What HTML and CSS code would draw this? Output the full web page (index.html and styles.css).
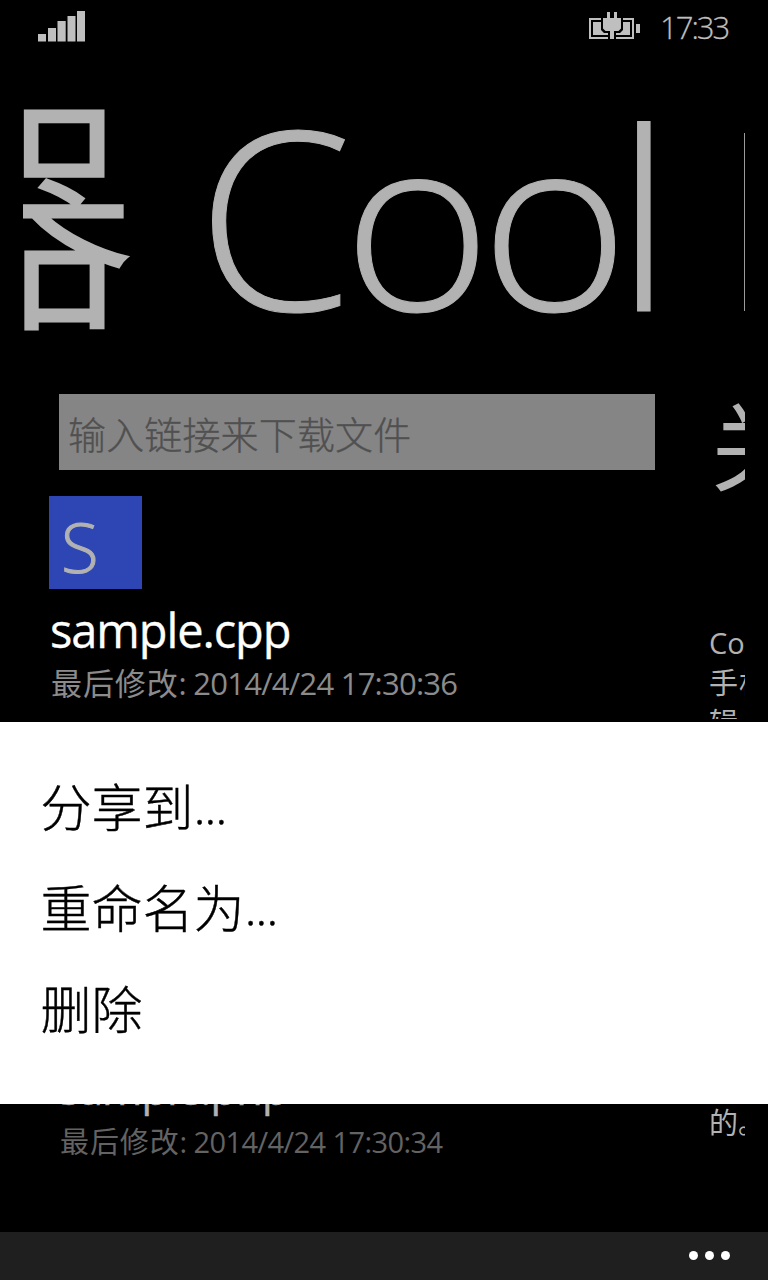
FILE: index.html
```html
<!DOCTYPE html>
<html lang="zh-CN">
<head>
<meta charset="utf-8">
<title>Cool Editor</title>
<link rel="stylesheet" href="styles.css">
</head>
<body>
<div class="phone">
  <header class="status">
    <svg class="signal" width="48" height="32" viewBox="0 0 48 32" fill="#bfbfbf">
      <path d="M0 24h8v7.500H0zM10 18h8v13.500h-8zM19.500 11h8.200v20.500h-8.200zM29.500 6h8v25.500h-8zM39 1h8v30.500h-8z"/>
    </svg>
    <div class="status-right">
      <svg class="battery" width="52" height="28" viewBox="0 0 52 28">
        <path d="M1 7h43v19H1z" fill="none" stroke="#bfbfbf" stroke-width="2"/>
        <path d="M4 10h37v13H4zM47 12h4v9h-4z" fill="#bfbfbf"/>
        <path d="M12 4h22v14l-3 3h-4v7h-8v-7h-4l-3-3z" fill="#000"/>
        <path d="M18 0h3v6h4V0h3v6h4v10.500L29.500 19H25v8h-4v-8h-4.500L14 16.500V6h4z" fill="#bfbfbf"/>
      </svg>
      <span class="clock">17:33</span>
    </div>
  </header>
  <main class="panorama">
    <h1 class="title"><span class="title-cjk">器</span><span class="title-name">C<span class="title-oo">oo</span>l</span><span class="title-next">E</span></h1>
    <div class="sections">
      <section class="files">
        <div class="url">输入链接来下载文件</div>
        <div class="tile">S</div>
        <div class="name">sample.cpp</div>
        <div class="date"><span class="date-label">最后修改</span>: 2014/4/24 17:30:36</div>
        <div class="item">
          <div class="name name-small">sample.php</div>
          <div class="date date-small"><span class="date-label">最后修改</span>: 2014/4/24 17:30:34</div>
        </div>
      </section>
      <section class="about">
        <h2 class="about-title">关于</h2>
        <p class="about-text">Cool<br><span class="about-cjk">手机</span><br>辑</p>
        <p class="about-end">的。</p>
      </section>
    </div>
  </main>
  <footer class="appbar"><i class="dot"></i><i class="dot"></i><i class="dot"></i></footer>
  <nav class="menu">
    <div class="menu-item">分享到<span class="dots">...</span></div>
    <div class="menu-item">重命名为<span class="dots">...</span></div>
    <div class="menu-item">删除</div>
  </nav>
</div>
</body>
</html>
```
FILE: styles.css
```css
* { box-sizing: border-box; }
body { margin: 0; background: #000; }
.phone {
  position: relative;
  display: flex;
  flex-direction: column;
  width: 768px;
  height: 1280px;
  overflow: hidden;
  background: #000;
  color: #b2b2b2;
  font-family: "Open Sans", "Noto Sans CJK SC", sans-serif;
  white-space: nowrap;
}
.status {
  display: flex;
  justify-content: space-between;
  flex: none;
  height: 56px;
  padding: 10px 39px 0 38px;
}
.status-right { display: flex; gap: 19px; }
.battery { margin-top: 2px; }
.clock {
  width: 69px;
  font-size: 31px;
  font-weight: 300;
  line-height: 34px;
  letter-spacing: -2px;
  color: #bfbfbf;
  -webkit-text-stroke: .3px #bfbfbf;
}
.panorama { flex: 1; min-height: 0; margin: 0 23px; overflow: hidden; }
.title {
  display: flex;
  height: 338px;
  margin: 0 0 0 -139px;
  font-size: 250px;
  font-weight: 300;
  line-height: 316px;
}
.title-cjk {
  width: 313px;
  flex: none;
  font-family: "Noto Sans CJK SC", sans-serif;
  font-weight: 300;
  font-size: 252px;
  line-height: 290px;
  -webkit-text-stroke: 3px #b2b2b2;
}
.title-name { width: 522px; flex: none; letter-spacing: -8px; -webkit-text-stroke: 1px #b2b2b2; }
.title-oo {
  display: inline-block;
  letter-spacing: -11px;
  transform: translateX(1px) scale(1.015, .965);
  transform-origin: 50% 258px;
}
.title-next { flex: none; }
.sections { display: flex; }
.files { width: 686px; flex: none; padding-left: 26px; }
.url {
  width: 596px;
  height: 76px;
  margin-left: 10px;
  padding-left: 9px;
  background: #858585;
  color: #505050;
  font-size: 38px;
  font-weight: 300;
  letter-spacing: .15px;
  line-height: 80px;
  -webkit-text-stroke: .3px #505050;
}
.tile {
  width: 93px;
  height: 93px;
  margin-top: 26px;
  padding-left: 12px;
  background: #2d46b3;
  font-size: 69px;
  font-weight: 300;
  line-height: 100px;
  -webkit-text-stroke: 1px #b2b2b2;
}
.name {
  margin: 9px 0 2px 1px;
  font-size: 47px;
  line-height: 64px;
  letter-spacing: -1.1px;
  color: #fff;
  -webkit-text-stroke: .3px currentColor;
}
.date {
  margin-left: 2px;
  font-size: 31px;
  line-height: 38px;
  letter-spacing: -.75px;
  color: #8b8b8b;
}
.date-label { letter-spacing: .9px; }
.item { margin: 354px 0 0 9px; }
.name-small { font-size: 44px; margin: 0 0 3px 1px; letter-spacing: -1.3px; color: #b2b2b2; }
.date-small { font-size: 29px; letter-spacing: -.6px; color: #636363; }
.about { flex: none; }
.about-title {
  height: 200px;
  margin: 0 0 0 2px;
  font-size: 96px;
  font-weight: 400;
  line-height: 104px;
}
.about-text, .about-end { margin: 0; font-size: 29px; line-height: 40px; }
.about-text { margin-top: 29px; }
.about-cjk { letter-spacing: 1px; }
.about-end { margin-top: 360px; }
.appbar {
  display: flex;
  align-items: center;
  justify-content: flex-end;
  gap: 7px;
  flex: none;
  height: 48px;
  padding: 0 38px 1px 0;
  background: #1f1f1f;
}
.dot { width: 9px; height: 9px; border-radius: 50%; background: #fff; }
.menu {
  position: absolute;
  left: 0;
  top: 719px;
  width: 768px;
  height: 385px;
  padding: 35px 0 0 40.5px;
  border-top: 3px solid #000;
  background: #fff;
  color: #000;
}
.menu-item {
  height: 101px;
  font-size: 51px;
  font-weight: 300;
  line-height: 101px;
  -webkit-text-stroke: .4px #000;
}
.dots { position: relative; top: -3px; letter-spacing: -1.3px; }
```
